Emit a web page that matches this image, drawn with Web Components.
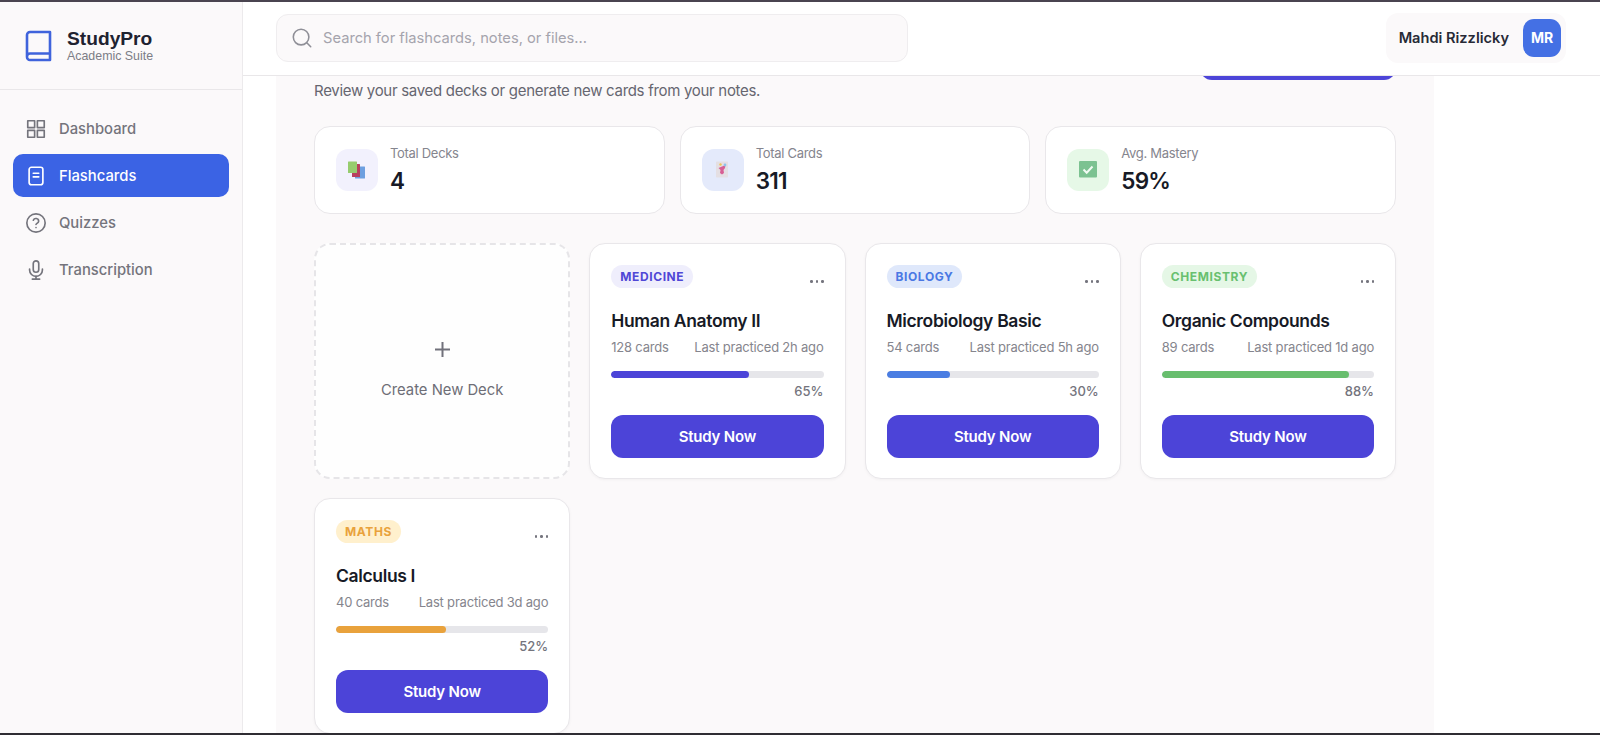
<!DOCTYPE html>
<html lang="en">
<head>
<meta charset="utf-8">
<title>StudyPro</title>
<style>
  html, body { margin: 0; height: 100%; overflow: hidden; background: #fff; }
</style>
</head>
<body>
<study-app></study-app>
<script>
const ICONS = {
  grid: `<rect x="3" y="3" width="7.5" height="7.5"/><rect x="13.5" y="3" width="7.5" height="7.5"/><rect x="3" y="13.5" width="7.5" height="7.5"/><rect x="13.5" y="13.5" width="7.5" height="7.5"/>`,
  card: `<rect x="4.5" y="2.5" width="15" height="19" rx="2.5"/><path d="M9 9h6M9 13h6"/>`,
  help: `<circle cx="12" cy="12" r="10"/><path d="M9.1 9a3 3 0 0 1 5.8 1c0 2-2.9 2.6-2.9 3.6"/><path d="M12 17h.01"/>`,
  mic: `<rect x="9" y="2" width="6" height="12.5" rx="3"/><path d="M19 11v1a7 7 0 0 1-14 0v-1"/><path d="M12 19v3M8 22h8"/>`
};

class NavItem extends HTMLElement {
  constructor() {
    super();
    this.attachShadow({ mode: "open" });
  }

  connectedCallback() {
    this.shadowRoot.innerHTML = /* html */`
    <style>
      :host {
        display: flex;
        align-items: center;
        gap: 12px;
        height: 43px;
        padding: 0 12px;
        border-radius: 10px;
        color: #74747c;
        font: 500 14.800px Inter, sans-serif;
      }
      :host([active]) { background: #3b63e4; color: #fff; }
      svg { width: 22px; height: 22px; fill: none; stroke: currentColor; stroke-width: 1.8; stroke-linecap: round; stroke-linejoin: round; }
    </style>
    <svg viewBox="0 0 24 24">${ICONS[this.getAttribute("icon")]}</svg>
    <slot></slot>`;
  }
}

class StudySidebar extends HTMLElement {
  constructor() {
    super();
    this.attachShadow({ mode: "open" });
  }

  connectedCallback() {
    this.shadowRoot.innerHTML = /* html */`
    <style>
      :host {
        display: block;
        flex: none;
        box-sizing: border-box;
        width: 243px;
        background: #fbf9fa;
        border-right: 1px solid #eceaec;
      }
      .brand {
        display: flex;
        align-items: center;
        gap: 15px;
        height: 88px;
        box-sizing: border-box;
        padding: 0 0 0 25px;
        border-bottom: 1px solid #e9e7e9;
      }
      .brand svg { width: 27px; height: 32px; flex: none; }
      b { display: block; font: 700 19.200px/21px "Liberation Sans", sans-serif; color: #1e2230; }
      small { display: block; margin-top: 1px; font: 12.400px/13px "Liberation Sans", sans-serif; color: #7c7d86; }
      nav { display: flex; flex-direction: column; gap: 4px; padding: 17px 13px; }
    </style>
    <div class="brand">
      <svg viewBox="0 0 27 32" fill="none" stroke="#3f63dc" stroke-width="2.6" stroke-linejoin="round">
        <path d="M2 26.500V5a3 3 0 0 1 3-3h20v28H5a3 3 0 0 1-3-3v-.5a3 3 0 0 1 3-3h20"/>
      </svg>
      <div><b>StudyPro</b><small>Academic Suite</small></div>
    </div>
    <nav><slot></slot></nav>`;
  }
}

class TopHeader extends HTMLElement {
  constructor() {
    super();
    this.attachShadow({ mode: "open" });
  }

  connectedCallback() {
    this.shadowRoot.innerHTML = /* html */`
    <style>
      :host {
        display: flex;
        flex: none;
        align-items: center;
        justify-content: space-between;
        box-sizing: border-box;
        height: 74px;
        padding: 0 34px 2px 33px;
        border-bottom: 1px solid #e9e7e9;
        background: #fff;
      }
      .search {
        display: flex;
        align-items: center;
        gap: 10px;
        box-sizing: border-box;
        width: 632px;
        height: 48px;
        padding: 0 14px;
        border: 1px solid #efedef;
        border-radius: 12px;
        background: #fbf9fa;
        color: #a5a4ad;
        font: 400 14.700px Inter, sans-serif;
      }
      .search svg { width: 22px; height: 22px; fill: none; stroke: #8f8f97; stroke-width: 1.700; stroke-linecap: round; }
      .user {
        display: flex;
        align-items: center;
        gap: 14px;
        box-sizing: border-box;
        height: 50px;
        padding: 0 5px 0 13px;
        border-radius: 12px;
        background: #fbf9fa;
        color: #272a36;
        font: 600 14.600px Inter, sans-serif;
      }
      .avatar {
        display: grid;
        place-items: center;
        width: 38px;
        height: 38px;
        border-radius: 11px;
        background: #4470e4;
        color: #fff;
        font-size: 14px;
        font-weight: 700;
      }
    </style>
    <div class="search">
      <svg viewBox="0 0 24 24"><circle cx="11" cy="11" r="8.500"/><path d="M17.500 17.500 21.500 21.500"/></svg>
      <span>Search for flashcards, notes, or files...</span>
    </div>
    <div class="user"><span>Mahdi Rizzlicky</span><span class="avatar">MR</span></div>`;
  }
}

class StatCard extends HTMLElement {
  constructor() {
    super();
    this.attachShadow({ mode: "open" });
  }

  connectedCallback() {
    this.shadowRoot.innerHTML = /* html */`
    <style>
      :host {
        display: flex;
        align-items: center;
        gap: 12px;
        box-sizing: border-box;
        height: 88px;
        padding: 0 21px;
        border: 1px solid #e9e7ea;
        border-radius: 16px;
        background: #fff;
      }
      .icon {
        display: grid;
        place-items: center;
        width: 42px;
        height: 42px;
        border-radius: 12px;
        background: var(--tint);
      }
      ::slotted(svg) { width: 20px; height: 20px; display: block; }
      .label { font: 400 13px/16px Inter, sans-serif; letter-spacing: -.3px; color: #85858e; }
      .value { margin: 5px 0 -1px; font: 600 22.500px/30px Inter, sans-serif; letter-spacing: -.8px; color: #171a26; }
    </style>
    <div class="icon"><slot></slot></div>
    <div>
      <div class="label">${this.getAttribute("label")}</div>
      <div class="value">${this.getAttribute("value")}</div>
    </div>`;
  }
}

class CreateDeck extends HTMLElement {
  constructor() {
    super();
    this.attachShadow({ mode: "open" });
  }

  connectedCallback() {
    this.shadowRoot.innerHTML = /* html */`
    <style>
      :host {
        display: flex;
        flex-direction: column;
        align-items: center;
        justify-content: center;
        gap: 24px;
        box-sizing: border-box;
        height: 236px;
        padding-top: 18px;
        border: 2px dashed #e6e5e8;
        border-radius: 16px;
        background: #fefefe;
        color: #6e6e77;
        font: 400 14.800px Inter, sans-serif;
      }
      svg { width: 15px; height: 15px; stroke: #71717b; stroke-width: 2; }
    </style>
    <svg viewBox="0 0 15 15"><path d="M7.500 0v15M0 7.500h15"/></svg>
    <span>Create New Deck</span>`;
  }
}

class DeckCard extends HTMLElement {
  constructor() {
    super();
    this.attachShadow({ mode: "open" });
  }

  connectedCallback() {
    const progress = this.getAttribute("progress");
    this.shadowRoot.innerHTML = /* html */`
    <style>
      :host {
        display: block;
        box-sizing: border-box;
        height: 236px;
        padding: 21px;
        border: 1px solid #e9e7ea;
        border-radius: 16px;
        background: #fff;
        box-shadow: 0 1px 3px #0000000a;
      }
      .top { display: flex; justify-content: space-between; }
      .tag {
        box-sizing: border-box;
        height: 23px;
        padding: 0 9px;
        border-radius: 12px;
        background: var(--tag-bg);
        color: var(--tag-fg);
        font: 700 12px/23px Inter, sans-serif;
        letter-spacing: .6px;
      }
      .more { display: flex; gap: 3px; padding-top: 15px; }
      .more i { width: 2.500px; height: 2.500px; border-radius: 50%; background: #75757e; }
      h3 { margin: 20px 0 0; font: 600 17.500px/26px Inter, sans-serif; letter-spacing: -.35px; color: #171a26; }
      .meta {
        display: flex;
        justify-content: space-between;
        margin-top: 4px;
        font: 400 13px/18px Inter, sans-serif;
        letter-spacing: -.2px;
        color: #85858d;
      }
      .bar { height: 7px; margin-top: 15px; border-radius: 4px; background: #e6e6ea; overflow: hidden; }
      .bar div { height: 100%; width: ${progress}%; border-radius: 4px; background: var(--bar); }
      .pct { margin-top: 5px; text-align: right; font: 500 13px/17px Inter, sans-serif; color: #74747d; }
      .study {
        display: grid;
        place-items: center;
        height: 43px;
        margin-top: 15px;
        border-radius: 12px;
        background: #4c44d8;
        color: #fff;
        font: 600 15px Inter, sans-serif;
        letter-spacing: -.2px;
      }
    </style>
    <div class="top">
      <span class="tag">${this.getAttribute("tag")}</span>
      <span class="more"><i></i><i></i><i></i></span>
    </div>
    <h3>${this.getAttribute("name")}</h3>
    <div class="meta"><span>${this.getAttribute("cards")} cards</span><span>Last practiced ${this.getAttribute("last")}</span></div>
    <div class="bar"><div></div></div>
    <div class="pct">${progress}%</div>
    <div class="study">Study Now</div>`;
  }
}

class StudyApp extends HTMLElement {
  constructor() {
    super();
    this.attachShadow({ mode: "open" });
  }

  connectedCallback() {
    this.shadowRoot.innerHTML = /* html */`
    <style>
      :host {
        display: flex;
        box-sizing: border-box;
        height: 735px;
        border-top: 2px solid #4a4450;
        border-bottom: 2px solid #2f2d33;
        overflow: hidden;
      }
      main { flex: 1; display: flex; flex-direction: column; min-width: 0; }
      .panel {
        flex: 1;
        box-sizing: border-box;
        width: 1158px;
        margin-left: 33px;
        padding: 0 38px;
        background: #fbf9fa;
        overflow: hidden;
      }
      .head { display: flex; justify-content: space-between; height: 50px; }
      .head p { margin: 5px 0 0; font: 400 15px/20px Inter, sans-serif; letter-spacing: -.3px; color: #666670; }
      .new-deck { display: flex; align-items: flex-end; width: 196px; height: 4px; overflow: hidden; }
      .new-deck::before { content: ""; flex: none; width: 100%; height: 24px; border-radius: 12px; background: #4c44d8; }
      .stats { display: grid; grid-template-columns: repeat(3, 1fr); gap: 15px; }
      .decks { display: grid; grid-template-columns: repeat(4, 1fr); gap: 19px; margin-top: 29px; }
    </style>
    <study-sidebar>
      <nav-item icon="grid">Dashboard</nav-item>
      <nav-item icon="card" active>Flashcards</nav-item>
      <nav-item icon="help">Quizzes</nav-item>
      <nav-item icon="mic">Transcription</nav-item>
    </study-sidebar>
    <main>
      <top-header></top-header>
      <div class="panel">
        <div class="head">
          <p>Review your saved decks or generate new cards from your notes.</p>
          <div class="new-deck"></div>
        </div>
        <div class="stats">
          <stat-card label="Total Decks" value="4" style="--tint:#f2f1fd">
            <svg viewBox="0 0 20 20">
              <rect x="8" y="6.500" width="10" height="12" rx=".5" fill="#6d9fe0"/>
              <rect x="5" y="4" width="8" height="13" rx=".5" fill="#b8405e"/>
              <rect x="1" y="1.500" width="9" height="11.500" rx=".5" fill="#96cc6e"/>
            </svg>
          </stat-card>
          <stat-card label="Total Cards" value="311" style="--tint:#e4eafb">
            <svg viewBox="0 0 20 20">
              <rect x="3" y="1.500" width="12" height="16" rx=".8" fill="#e4dfe3"/>
              <path d="M5.500 8 9 6.500 12.500 5 12 8l-1.500 2 .5 3-2 1.500L7 13l.5-3z" fill="#d75f95"/>
              <circle cx="12" cy="5" r="1.400" fill="#8dc3ec"/>
              <circle cx="7.500" cy="4.500" r="1.200" fill="#ecc659"/>
            </svg>
          </stat-card>
          <stat-card label="Avg. Mastery" value="59%" style="--tint:#e6f8e7">
            <svg viewBox="0 0 20 20">
              <rect x="1" y="1" width="18" height="16.500" rx="1" fill="#7cc291"/>
              <path d="M5.500 9.500l3.200 3.200 5.800-6.200" fill="none" stroke="#f2faf3" stroke-width="2"/>
            </svg>
          </stat-card>
        </div>
        <div class="decks">
          <create-deck></create-deck>
          <deck-card tag="MEDICINE" name="Human Anatomy II" cards="128" last="2h ago" progress="65" style="--tag-bg:#efeefc;--tag-fg:#4f47d6;--bar:#4c44d8"></deck-card>
          <deck-card tag="BIOLOGY" name="Microbiology Basic" cards="54" last="5h ago" progress="30" style="--tag-bg:#dfe8fb;--tag-fg:#4a78e4;--bar:#4a7de2"></deck-card>
          <deck-card tag="CHEMISTRY" name="Organic Compounds" cards="89" last="1d ago" progress="88" style="--tag-bg:#e5f7e6;--tag-fg:#68c06f;--bar:#68be6e"></deck-card>
          <deck-card tag="MATHS" name="Calculus I" cards="40" last="3d ago" progress="52" style="--tag-bg:#fff0cd;--tag-fg:#e9a23c;--bar:#e9a23c"></deck-card>
        </div>
      </div>
    </main>`;
  }
}

customElements.define("nav-item", NavItem);
customElements.define("study-sidebar", StudySidebar);
customElements.define("top-header", TopHeader);
customElements.define("stat-card", StatCard);
customElements.define("create-deck", CreateDeck);
customElements.define("deck-card", DeckCard);
customElements.define("study-app", StudyApp);
</script>
</body>
</html>
